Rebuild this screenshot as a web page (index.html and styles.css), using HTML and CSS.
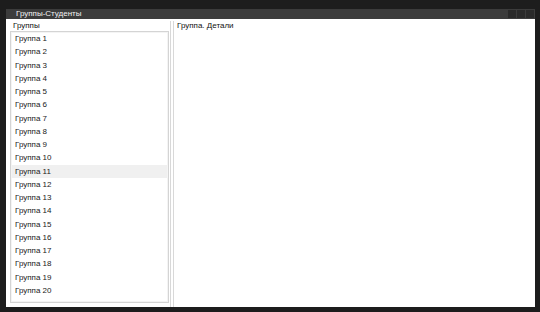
FILE: index.html
```html
<!DOCTYPE html>
<html lang="ru">
<head>
  <meta charset="UTF-8" />
  <title>Группы-Студенты</title>
  <link rel="stylesheet" href="styles.css">
</head>
<body>
  <div class="window">
    <div class="titlebar">
      <span class="title">Группы-Студенты</span>
      <div class="controls">
        <span class="ctrl"></span>
        <span class="ctrl"></span>
        <span class="ctrl"></span>
      </div>
    </div>

    <div class="content">
      <!-- Groups list -->
      <div class="left-panel">
        <div class="panel-label">Группы</div>
        <ul class="group-list" id="groupList"></ul>
      </div>

      <div class="splitter"></div>

      <!-- Details -->
      <div class="right-panel">
        <div class="panel-label">Группа. Детали</div>
      </div>
    </div>
  </div>

  <script>
    const list = document.getElementById('groupList');
    for (let i = 1; i <= 20; i++) {
      const li = document.createElement('li');
      li.textContent = 'Группа ' + i;
      if (i === 11) li.className = 'selected';
      list.appendChild(li);
    }
  </script>
</body>
</html>
```

FILE: styles.css
```css
body {
  margin: 0;
  padding: 9px 5px 5px 6px;
  background: #1d1d1d;
  font-family: 'Liberation Sans', Arial, sans-serif;
  font-size: 8px;
  color: #222;
}

.window {
  width: 529px;
  height: 298px;
  display: flex;
  flex-direction: column;
  background: #fff;
}

.titlebar {
  height: 10px;
  background: #3c3c3c;
  display: flex;
  align-items: center;
  justify-content: space-between;
}

.title {
  color: #f0f0f0;
  padding-left: 10px;
  font-size: 8px;
  line-height: 10px;
}

.controls {
  display: flex;
  gap: 1px;
  padding-right: 1px;
}

.ctrl {
  width: 8px;
  height: 8px;
  background: #2a2a2a;
}

.content {
  flex: 1;
  display: flex;
  min-height: 0;
}

.left-panel {
  box-sizing: border-box;
  width: 163px;
  padding: 2px 0 4px 4px;
  display: flex;
  flex-direction: column;
}

.panel-label {
  height: 10px;
  line-height: 10px;
  padding-left: 3px;
  color: #111;
}

.group-list {
  flex: 1;
  list-style: none;
  margin: 0;
  padding: 0 1px;
  border: 1px solid #d4d4d4;
  box-shadow: inset 0 0 0 1px #f4f4f4;
}

.group-list li {
  height: 13.25px;
  line-height: 13.25px;
  padding-left: 3px;
  color: #222;
}

.group-list li.selected {
  background: #f0f0f0;
}

.splitter {
  width: 2px;
  margin: 2px 0 0 1px;
  border-left: 1px solid #d8d8d8;
  border-right: 1px solid #d8d8d8;
}

.right-panel {
  flex: 1;
  padding: 2px 0 0 0;
}
```
